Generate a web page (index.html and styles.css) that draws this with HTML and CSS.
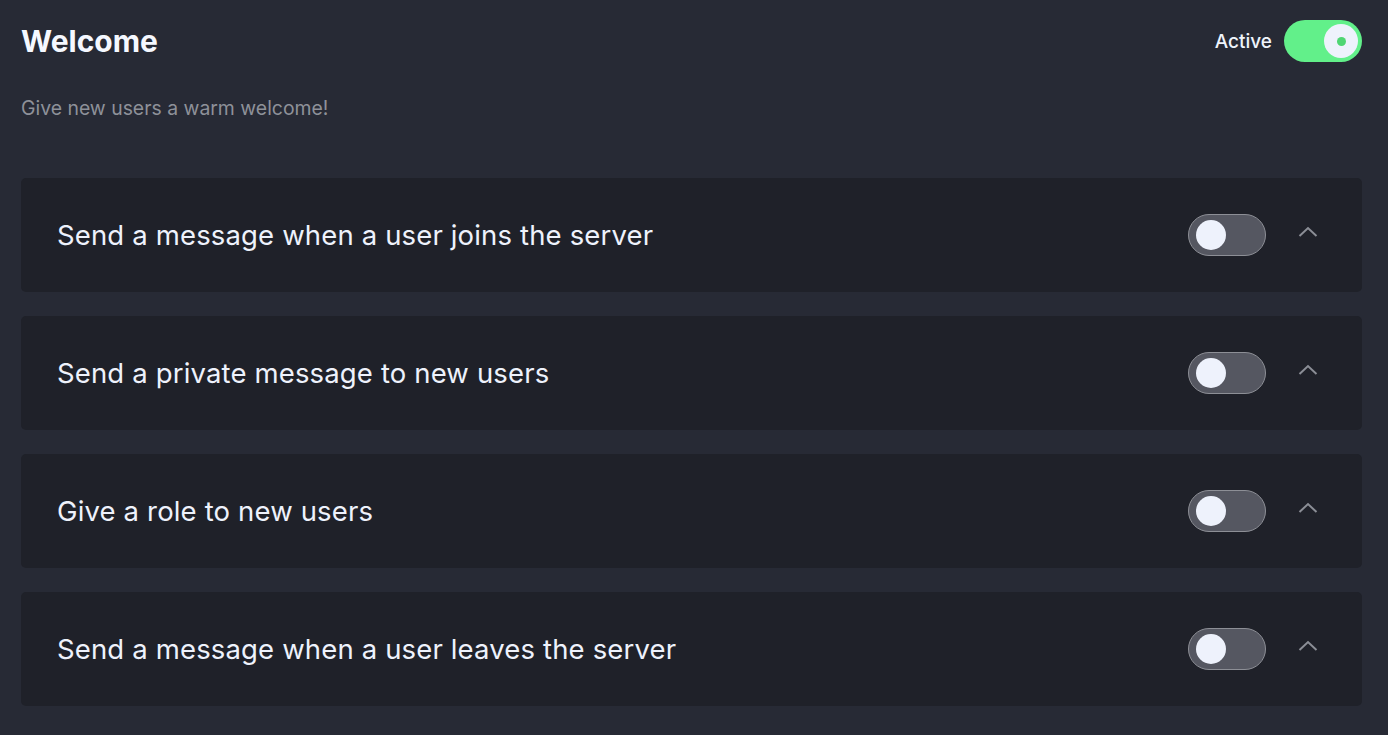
FILE: index.html
```html
<!DOCTYPE html>
<html>
<head>
<meta charset="utf-8">
<link rel="stylesheet" href="styles.css">
</head>
<body>
<div class="page">
  <header class="header">
    <h1 class="title">Welcome</h1>
    <div class="active">
      <span class="active-label">Active</span>
      <span class="switch switch-on"><span class="knob"><span class="dot"></span></span></span>
    </div>
  </header>
  <p class="subtitle">Give new users a warm welcome!</p>
  <div class="list">
    <div class="card">
      <span class="card-text">Send a message when a user joins the server</span>
      <div class="controls">
        <span class="switch switch-off"><span class="knob"></span></span>
        <svg class="chev" width="20" height="12" viewBox="0 0 20 12"><path d="M1.5 10 L10 2 L18.5 10" fill="none" stroke="#8b8e96" stroke-width="2"/></svg>
      </div>
    </div>
    <div class="card">
      <span class="card-text">Send a private message to new users</span>
      <div class="controls">
        <span class="switch switch-off"><span class="knob"></span></span>
        <svg class="chev" width="20" height="12" viewBox="0 0 20 12"><path d="M1.5 10 L10 2 L18.5 10" fill="none" stroke="#8b8e96" stroke-width="2"/></svg>
      </div>
    </div>
    <div class="card">
      <span class="card-text">Give a role to new users</span>
      <div class="controls">
        <span class="switch switch-off"><span class="knob"></span></span>
        <svg class="chev" width="20" height="12" viewBox="0 0 20 12"><path d="M1.5 10 L10 2 L18.5 10" fill="none" stroke="#8b8e96" stroke-width="2"/></svg>
      </div>
    </div>
    <div class="card">
      <span class="card-text">Send a message when a user leaves the server</span>
      <div class="controls">
        <span class="switch switch-off"><span class="knob"></span></span>
        <svg class="chev" width="20" height="12" viewBox="0 0 20 12"><path d="M1.5 10 L10 2 L18.5 10" fill="none" stroke="#8b8e96" stroke-width="2"/></svg>
      </div>
    </div>
  </div>
</div>
</body>
</html>
```
FILE: styles.css
```css
html, body {
  margin: 0;
  padding: 0;
  background: #272a35;
  font-family: "Inter", "Noto Sans", sans-serif;
  color: #eef2fc;
}
.page {
  padding: 20px 26px 0 21px;
}
.header {
  display: flex;
  align-items: center;
  justify-content: space-between;
  height: 42px;
}
.title {
  margin: 0;
  font-size: 30px;
  font-weight: 700;
  color: #f5f8ff;
}
.active {
  display: flex;
  align-items: center;
  gap: 12px;
}
.active-label {
  font-size: 19px;
  font-weight: 500;
  color: #f0f4fc;
}
.subtitle {
  margin: 34px 0 0 0;
  font-size: 19.4px;
  color: #8e9199;
  line-height: 24px;
}
.list {
  margin-top: 58px;
  display: flex;
  flex-direction: column;
  gap: 24px;
}
.card {
  height: 114px;
  background: #1f2129;
  border-radius: 5px;
  display: flex;
  align-items: center;
  justify-content: space-between;
  padding: 0 44px 0 36px;
  box-sizing: border-box;
}
.card-text {
  font-size: 27.5px;
  letter-spacing: 0.15px;
  color: #eef2fc;
}
.controls {
  display: flex;
  align-items: center;
  gap: 32px;
}
.switch {
  width: 78px;
  height: 42px;
  border-radius: 21px;
  box-sizing: border-box;
  display: flex;
  align-items: center;
}
.switch-on {
  background: #62f08a;
  justify-content: flex-end;
  padding-right: 4px;
}
.switch-off {
  background: #555761;
  border: 1px solid #8d8f96;
  padding-left: 7px;
}
.knob {
  width: 30px;
  height: 30px;
  border-radius: 50%;
  background: #eef2fc;
  display: flex;
  align-items: center;
  justify-content: center;
}
.switch-on .knob {
  width: 34px;
  height: 34px;
}
.dot {
  width: 9px;
  height: 9px;
  border-radius: 50%;
  background: #4fd673;
}
.chev {
  display: block;
  margin-top: -7px;
}
```
